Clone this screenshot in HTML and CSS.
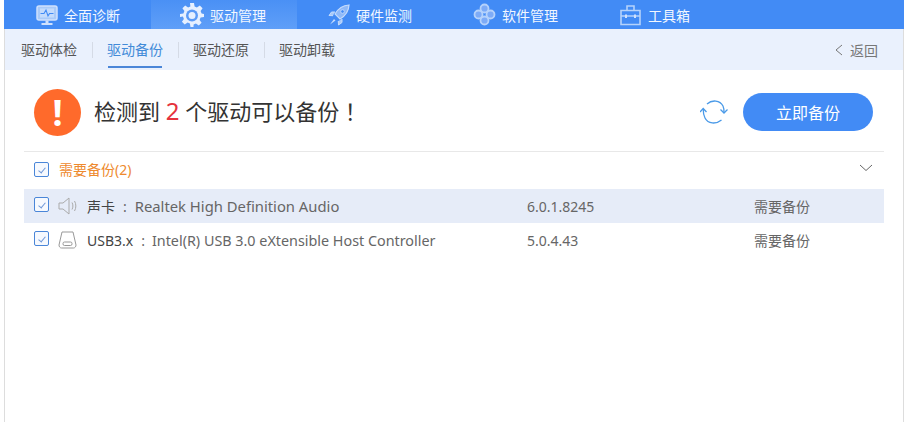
FILE: index.html
```html
<!DOCTYPE html>
<html lang="en">
<head>
	<meta charset="utf-8" />
	<title>驱动管理</title>
	<link rel="stylesheet" href="styles.css">
</head>
<body>
<div class="topbar">
	<div class="topitem">
		<svg width="22" height="22" viewBox="0 0 22 22"><rect x="1" y="2" width="20" height="14" rx="2" fill="#a9caf9" stroke="#cfe1fd" stroke-width="1.500"/><rect x="4" y="4.500" width="14" height="9" fill="#c4dbfc"/><path d="M4.500 9.500h3.500l2-3.500 2 6 1.500-2.500h4" fill="none" stroke="#428bf5" stroke-width="1.100"/><path d="M9.500 16.500h3v2.500h-3zM5.500 19h11v2h-11z" fill="#cfe1fd"/></svg>
		全面诊断
	</div>
	<div class="topitem active">
		<svg width="24" height="24" viewBox="0 0 24 24"><path d="M10 0h4l.6 3.400 2.300 1 2.900-2 2.800 2.800-2 2.900 1 2.300L24 11v3l-3.400.6-1 2.300 2 2.900-2.800 2.800-2.900-2-2.300 1L13.500 24h-3l-.6-3.400-2.300-1-2.900 2-2.800-2.800 2-2.900-1-2.300L0 14v-3l3.400-.6 1-2.300-2-2.900 2.800-2.800 2.900 2 2.300-1z" fill="#e6f0ff"/><circle cx="12" cy="12.500" r="6" fill="#5b9bf7"/><circle cx="12" cy="12.500" r="3.500" fill="#e6f0ff"/></svg>
		驱动管理
	</div>
	<div class="topitem">
		<svg width="22" height="22" viewBox="0 0 22 22"><path d="M21 1c-6 .3-10.500 3-14 9l5 5c6-3.500 8.700-8 9-14z" fill="#8fb9f8" stroke="#c4dbfc" stroke-width="1.200"/><path d="M7 8H3.500L1 11.500l4 .2M14 15v3.500L10.500 21l-.2-4" fill="#a9caf9" stroke="#c4dbfc"/><circle cx="14.500" cy="7.500" r="1.800" fill="#428bf5" stroke="#c4dbfc" stroke-width=".8"/><path d="M6 15 2 20.500l5.500-4z" fill="#c4dbfc"/></svg>
		硬件监测
	</div>
	<div class="topitem soft">
		<svg width="23" height="23" viewBox="0 0 23 23"><g fill="#7dabf7" stroke="#b5d2fb" stroke-width="1.800"><circle cx="11.500" cy="5.500" r="4"/><circle cx="11.500" cy="17.500" r="4"/><circle cx="5.500" cy="11.500" r="4"/><circle cx="17.500" cy="11.500" r="4"/></g></svg>
		软件管理
	</div>
	<div class="topitem tools">
		<svg width="21" height="22" viewBox="0 0 21 22"><path d="M1 6.500h19v14H1zM7 6.500V2h7v4.500M1 12h19" fill="none" stroke="#b5d2fb" stroke-width="1.600"/><path d="M5 10.500h2v3.500H5zM14 10.500h2v3.500h-2z" fill="#cfe1fd"/></svg>
		工具箱
	</div>
</div>

<div class="main">
	<div class="subnav">
		<span class="tab">驱动体检</span>
		<span class="sep"></span>
		<span class="tab current">驱动备份</span>
		<span class="sep"></span>
		<span class="tab">驱动还原</span>
		<span class="sep"></span>
		<span class="tab">驱动卸载</span>
		<span class="back">
			<svg width="9" height="12" viewBox="0 0 9 12"><path d="M8 1 2 6l6 5" fill="none" stroke="#777" stroke-width="1"/></svg>
			返回
		</span>
	</div>

	<div class="summary">
		<div class="alert">!</div>
		<h1>检测到 <span class="count">2</span> 个驱动可以备份<span class="bang">！</span></h1>
		<svg class="refresh" width="28" height="26" viewBox="0 0 28 26"><path d="M7 5C12 .5 20 1 23 7c.7 1.500 1 3.500 1 6.500" fill="none" stroke="#4a9ae8" stroke-width="1.300"/><path d="M20.500 10.500 24 14l3.500-3.500" fill="none" stroke="#4a9ae8" stroke-width="1.300"/><path d="M21.500 21C16 25.500 8 25 5 19c-.8-1.500-1.800-5-1.800-9" fill="none" stroke="#4a9ae8" stroke-width="1.300"/><path d="M0 13 3.200 9.500 6.500 13" fill="none" stroke="#4a9ae8" stroke-width="1.300"/></svg>
		<button type="button" class="backup">立即备份</button>
	</div>

	<div class="group">
		<span class="check"></span>
		<span class="grouptitle">需要备份(2)</span>
		<svg class="fold" width="14" height="8" viewBox="0 0 14 8"><path d="M1 1l6 5.500L13 1" fill="none" stroke="#666" stroke-width="1"/></svg>
	</div>

	<div class="row on">
		<span class="check"></span>
		<svg class="devicon" width="19" height="18" viewBox="0 0 19 18"><path d="M1 6h4l6-5v16l-6-5H1z" fill="none" stroke="#aaa"/><path d="M14 5.500c1.200 2 1.200 5 0 7M16.500 4c1.800 3 1.800 7 0 10" fill="none" stroke="#aaa"/></svg>
		<span class="name"><span class="kind">声卡</span><span class="colon">:</span>Realtek High Definition Audio</span>
		<span class="ver">6.0.1.8245</span>
		<span class="state">需要备份</span>
	</div>
	<div class="row">
		<span class="check"></span>
		<svg class="devicon" width="19" height="18" viewBox="0 0 19 18"><path d="M4 1h11l3 13c0 1.500-1 3-2.500 3h-12C2 17 1 15.500 1 14z" fill="none" stroke="#999"/><rect x="5" y="11" width="9" height="3.500" rx="1.500" fill="none" stroke="#999"/></svg>
		<span class="name"><span class="kind">USB3.x</span><span class="colon">:</span>Intel(R) USB 3.0 eXtensible Host Controller</span>
		<span class="ver">5.0.4.43</span>
		<span class="state">需要备份</span>
	</div>
</div>
</body>
</html>
```

FILE: styles.css
```css
*{
	font-family:"Noto Sans","Noto Sans CJK SC",sans-serif;
	box-sizing:border-box;
}

html,body{
	margin:0;
	height:100%;
	background:#fff;
	overflow:hidden;
}

body{
	padding-left:4px;
}

.topbar{
	display:flex;
	height:29px;
	padding-left:1px;
	background:#428bf5;
}

.topitem{
	display:flex;
	align-items:center;
	gap:6px;
	width:146px;
	padding-left:31px;
	font-size:14px;
	color:#f2f7ff;
}

.topitem.active{
	padding-left:29px;
	background:linear-gradient(to bottom,#4a90f5 0%,#5f9ff8 100%);
}

.topitem.soft{
	padding-left:30px;
}

.topitem.tools{
	gap:7px;
}

.main{
	height:393px;
	border-left:1px solid #ddd;
	border-right:1px solid #ddd;
}

.subnav{
	display:flex;
	align-items:center;
	height:41px;
	padding-left:16px;
	background:#eaf1fd;
	font-size:14px;
	color:#555;
}

.tab{
	position:relative;
	line-height:41px;
}

.tab.current{
	color:#428bd8;
}

.tab.current:after{
	content:"";
	position:absolute;
	left:1px;
	right:1px;
	bottom:2px;
	height:2px;
	background:#4a86d8;
}

.sep{
	width:1px;
	height:16px;
	margin:0 14px 0 15px;
	background:#d5dbe6;
}

.back{
	display:flex;
	align-items:center;
	gap:7px;
	margin-left:auto;
	margin-right:25px;
	font-size:14px;
	color:#777;
}

.summary{
	display:flex;
	align-items:center;
	height:82px;
	margin:0 19px;
	padding:3px 11px 0 10px;
	border-bottom:1px solid #e8e8e8;
}

.alert{
	width:47px;
	height:47px;
	border-radius:50%;
	background:#ff6a2b;
	color:#fff;
	font-size:36px;
	font-weight:bold;
	line-height:47px;
	text-align:center;
}

h1{
	margin:0 0 4px 13px;
	font-size:22px;
	font-weight:normal;
	color:#333;
	white-space:pre-wrap;
}

.count{
	font-size:24px;
	color:#e5333d;
}

.bang{
	font-family:"Noto Sans CJK TC",sans-serif;
}

.refresh{
	margin-left:auto;
	margin-right:15px;
}

.backup{
	width:130px;
	height:38px;
	border:0;
	border-radius:19px;
	background:#428bf5;
	font-size:16px;
	color:#fff;
}

.check{
	flex:none;
	position:relative;
	width:15px;
	height:15px;
	border:1px solid #4a86d8;
	border-radius:2px;
	background:#f6f9fe;
}

.check:after{
	content:"";
	position:absolute;
	left:5px;
	top:3px;
	width:3px;
	height:6px;
	border:solid #6f98d8;
	border-width:0 1px 1px 0;
	transform:rotate(40deg);
}

.group{
	display:flex;
	align-items:center;
	height:37px;
	margin:0 19px;
	padding:0 11px 2px 10px;
}

.grouptitle{
	margin:0 0 2px 10px;
	font-size:14px;
	color:#ee8a2e;
}

.fold{
	margin-left:auto;
	margin-top:-4px;
}

.row{
	display:flex;
	align-items:center;
	height:34px;
	margin:0 19px;
	padding-left:10px;
	font-size:14px;
	color:#666;
}

.row .check{
	margin-top:-3px;
}

.row.on{
	background:#e6ecf8;
}

.devicon{
	flex:none;
	margin-left:9px;
}

.name{
	width:440px;
	margin-left:10px;
	font-size:14.35px;
	white-space:nowrap;
}

.row.on .name{
	font-size:14.8px;
}

.kind{
	font-size:14px;
	color:#444;
}

.colon{
	margin:0 7px 0 8px;
	font-size:14px;
}

.row.on .colon{
	margin-right:8px;
}

.ver{
	width:227px;
}
```
